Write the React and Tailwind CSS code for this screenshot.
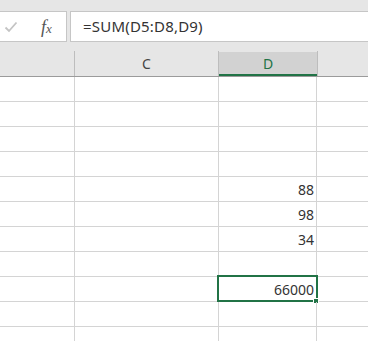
export default function App() {
  const rows = [
    { v: "" },
    { v: "" },
    { v: "" },
    { v: "" },
    { v: "88" },
    { v: "98" },
    { v: "34" },
    { v: "" },
    { v: "66000", selected: true },
    { v: "" },
    { v: "" },
  ];

  return (
    <div className="w-[368px] h-[341px] overflow-hidden bg-white font-['Noto_Sans',sans-serif] text-[14px] text-[#333]">
      {/* Formula bar */}
      <div className="bg-[#e6e6e6] pt-[11px] pb-[8px] flex gap-[3px]">
        <div className="w-[67px] h-[31px] bg-white border border-[#c6c6c6] border-l-0 flex items-center">
          <svg width="14" height="12" viewBox="0 0 14 12" className="ml-[4px]">
            <path d="M1.5 6.5 L5 10 L12.5 1.5" fill="none" stroke="#c4c4c4" strokeWidth="1.8" />
          </svg>
          <span className="ml-[23px] font-['Liberation_Serif',serif] italic text-[#555] text-[18px] leading-none">
            f<span className="text-[13px]">x</span>
          </span>
        </div>
        <div className="flex-1 h-[31px] bg-white border border-[#c6c6c6] border-r-0 flex items-center pl-[12px] text-[#333] text-[15px] tracking-[0.2px]">
          =SUM(D5:D8,D9)
        </div>
      </div>

      {/* Column headers */}
      <div className="flex h-[27px] bg-[#e6e6e6] border-b border-[#9b9b9b]">
        <div className="w-[75px] mt-[1px] border-r border-[#bdbdbd]" />
        <div className="w-[144px] mt-[1px] border-r border-[#bdbdbd] flex items-center justify-center text-[#444]">
          C
        </div>
        <div className="w-[98px] mt-[2px] bg-[#d2d2d2] border-b-2 border-[#217346] flex items-center justify-center text-[#217346]">
          D
        </div>
        <div className="flex-1 mt-[1px] border-l border-[#bdbdbd]" />
      </div>

      {/* Grid */}
      {rows.map((r, i) => (
        <div key={i} className="flex h-[25px] border-b border-[#d4d4d4]">
          <div className="w-[75px] border-r border-[#d4d4d4]" />
          <div className="w-[144px] border-r border-[#d4d4d4]" />
          <div className="relative w-[98px] border-r border-[#d4d4d4] flex items-center justify-end pr-[2px] text-[#333]">
            {r.v}
            {r.selected && (
              <>
                <div className="absolute -left-[2px] -top-[2px] -right-[2px] -bottom-[1px] border-2 border-[#217346]" />
                <div className="absolute -right-[3px] bottom-[-3px] w-[6px] h-[6px] bg-[#217346] border border-white" />
              </>
            )}
          </div>
          <div className="flex-1" />
        </div>
      ))}
    </div>
  );
}
